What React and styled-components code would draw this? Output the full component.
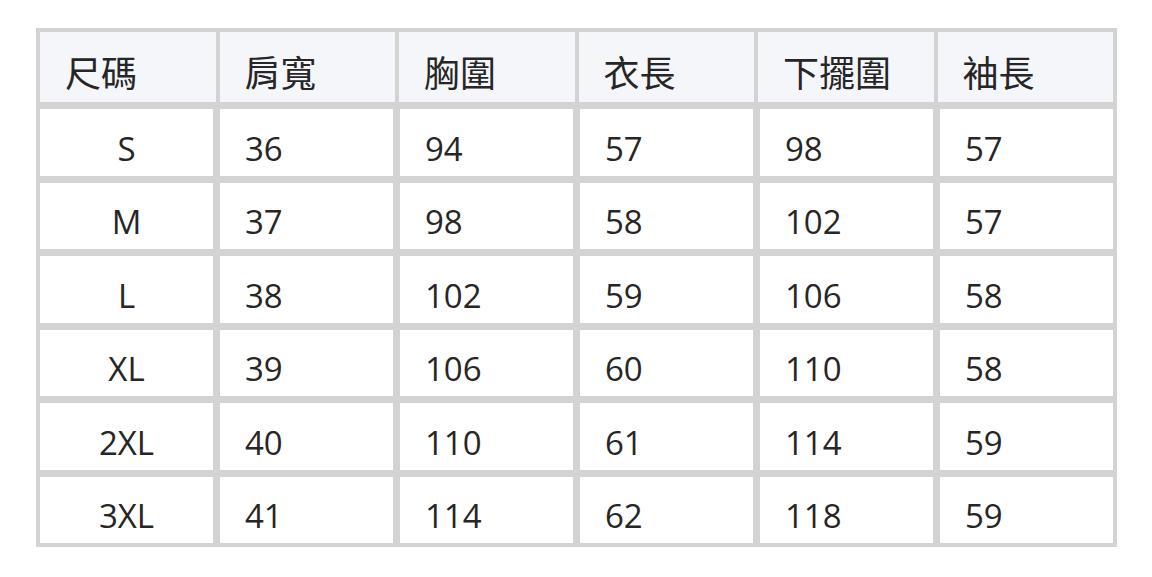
import React from 'react';
import styled, { createGlobalStyle } from 'styled-components';

const GlobalStyle = createGlobalStyle`
  body {
    margin: 0;
    background-color: #ffffff;
    font-family: "Open Sans", "Noto Sans CJK TC", sans-serif;
  }
`;

const Page = styled.div`
  padding: 28px 36px;
`;

const Table = styled.div`
  background-color: #d3d3d3;
  box-sizing: border-box;
  display: flex;
  flex-direction: column;
  gap: 7px;
  padding: 4px;
  width: 1081px;
`;

const Row = styled.div`
  display: grid;
  grid-template-columns: repeat(6, 1fr);
  gap: ${(props) => (props.$header ? '4px' : '7px')};
  height: ${(props) => (props.$header ? '70px' : '66.5px')};
`;

const Cell = styled.div`
  align-items: center;
  background-color: ${(props) => (props.$header ? '#f5f6fa' : '#ffffff')};
  box-sizing: border-box;
  color: #262626;
  display: flex;
  font-family: ${(props) => (props.$header ? '"Noto Sans CJK TC", sans-serif' : '"Open Sans", "Noto Sans CJK TC", sans-serif')};
  font-size: ${(props) => (props.$header ? '36px' : '33px')};
  justify-content: ${(props) => (props.$center ? 'center' : 'flex-start')};
  padding: ${(props) => (props.$header ? '8px' : '12px')} 0 0 ${(props) => (props.$center ? '0' : '25px')};
`;

const headers = ['尺碼', '肩寬', '胸圍', '衣長', '下擺圍', '袖長'];

const rows = [
  ['S', 36, 94, 57, 98, 57],
  ['M', 37, 98, 58, 102, 57],
  ['L', 38, 102, 59, 106, 58],
  ['XL', 39, 106, 60, 110, 58],
  ['2XL', 40, 110, 61, 114, 59],
  ['3XL', 41, 114, 62, 118, 59],
];

function App() {
  return (
    <Page>
      <GlobalStyle />
      <Table>
        <Row $header>
          {headers.map((title) => (
            <Cell $header key={title}>{title}</Cell>
          ))}
        </Row>
        {rows.map((row) => (
          <Row key={row[0]}>
            {row.map((value, index) => (
              <Cell $center={index === 0} key={index}>{value}</Cell>
            ))}
          </Row>
        ))}
      </Table>
    </Page>
  );
}

export default App;
